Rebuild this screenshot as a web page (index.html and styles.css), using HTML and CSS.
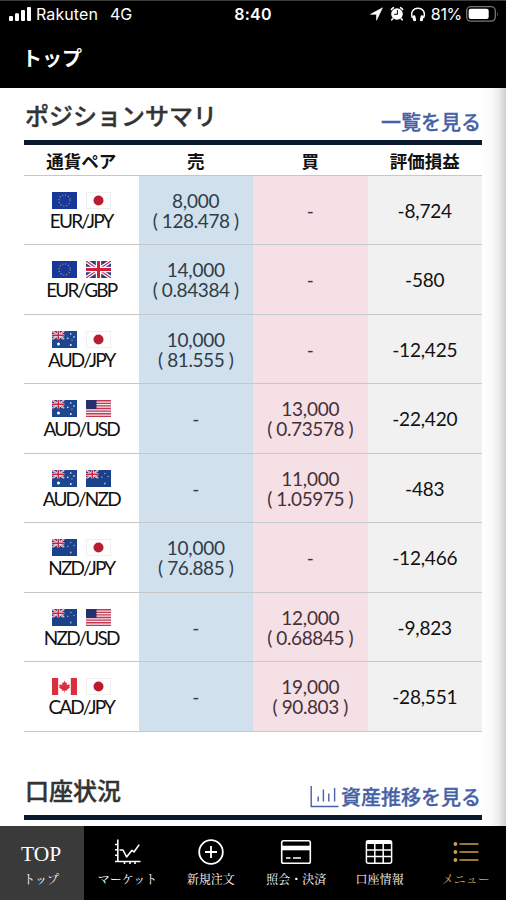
FILE: index.html
```html
<!DOCTYPE html>
<html lang="ja">
<head>
<meta charset="utf-8">
<title>トップ</title>
<link rel="stylesheet" href="styles.css">
</head>
<body>
<svg class="defs" width="0" height="0" aria-hidden="true">
  <symbol id="eu" viewBox="0 0 25 17"><rect width="25" height="17" fill="#17379b"/><circle cx="12.5" cy="8.5" r="5.6" fill="none" stroke="#a5a66f" stroke-width="1.2" stroke-dasharray="1 1.932"/></symbol>
  <symbol id="jp" viewBox="0 0 25 17"><rect x=".4" y=".4" width="24.2" height="16.2" fill="#fff" stroke="#ececec" stroke-width=".8"/><circle cx="12.5" cy="8.5" r="5" fill="#b71c30"/></symbol>
  <symbol id="gb" viewBox="0 0 25 17"><rect width="25" height="17" fill="#2b3a82"/><path d="M0 0L25 17M25 0L0 17" stroke="#fff" stroke-width="3.6"/><path d="M0 0L25 17M25 0L0 17" stroke="#c92b45" stroke-width="1.2"/><path d="M12.5 0V17M0 8.5H25" stroke="#fff" stroke-width="5.4"/><path d="M12.5 0V17M0 8.5H25" stroke="#cf1f3a" stroke-width="3"/></symbol>
  <symbol id="au" viewBox="0 0 25 17"><rect width="25" height="17" fill="#1d4590"/><use href="#gb" width="12.5" height="8.5"/><g fill="#fff"><circle cx="6.5" cy="13" r="1.5"/><circle cx="18.8" cy="3" r=".8"/><circle cx="15.8" cy="7.3" r=".8"/><circle cx="22" cy="6" r=".8"/><circle cx="20" cy="9" r=".5"/><circle cx="18.8" cy="14" r=".9"/></g></symbol>
  <symbol id="nz" viewBox="0 0 25 17"><rect width="25" height="17" fill="#1c418b"/><use href="#gb" width="12.5" height="8.5"/><g fill="#a9aed0"><circle cx="18.8" cy="3.5" r=".7"/><circle cx="15.8" cy="7.3" r=".7"/><circle cx="22" cy="6.5" r=".7"/><circle cx="18.8" cy="13.5" r=".9"/></g></symbol>
  <symbol id="us" viewBox="0 0 25 17"><rect width="25" height="17" fill="#f7e6ea"/><path d="M0 .7H25M0 3.3H25M0 5.9H25M0 8.5H25M0 11.1H25M0 13.7H25M0 16.3H25" stroke="#bd3a52" stroke-width="1.35"/><rect width="10.5" height="9" fill="#27306f"/></symbol>
  <symbol id="ca" viewBox="0 0 25 17"><rect width="25" height="17" fill="#fff"/><path d="M0 0H6.2V17H0ZM18.8 0H25V17H18.8Z" fill="#d8303f"/><path d="M12.5 2.8L13.7 5L15 4.5L14.7 7.5L16.4 6L16.8 7L18 6.8L17.3 8.8L18 9.4L14.9 11.8L15 12.7L12.8 12.4V14.4H12.2V12.4L10 12.7L10.1 11.8L7 9.4L7.7 8.8L7 6.8L8.2 7L8.6 6L10.3 7.5L10 4.5L11.3 5Z" fill="#d8303f"/></symbol>
</svg>

<header class="top">
  <div class="status">
    <div class="carrier">
      <svg width="24" height="16" viewBox="0 0 24 16" fill="#fff"><rect x="1" y="10" width="4" height="5" rx="1"/><rect x="7" y="7.3" width="4" height="7.7" rx="1"/><rect x="13" y="4" width="4" height="11" rx="1"/><rect x="19" y="1" width="4" height="14" rx="1"/></svg>
      <span class="name">Rakuten</span><span class="net">4G</span>
    </div>
    <div class="clock">8:40</div>
    <div class="indicators">
      <svg class="loc" width="13" height="14" viewBox="0 0 13 14"><path d="M12.5 .8L.5 7.3H6.5V13.3Z" fill="#fff" stroke="#fff" stroke-width=".6" stroke-linejoin="round"/></svg>
      <svg class="alarm" width="14" height="16" viewBox="0 0 14 16"><circle cx="7" cy="8" r="5.8" fill="#fff"/><path d="M1.4 3.4L3.4 1.7M10.6 1.7L12.6 3.4M2.8 12.7L1.8 13.8M11.2 12.7L12.2 13.8" stroke="#fff" stroke-width="1.6" stroke-linecap="round"/><path d="M7.4 4.2V8.3H4.2" fill="none" stroke="#000" stroke-width="1"/></svg>
      <svg class="phones" width="14" height="15" viewBox="0 0 14 15"><path d="M1.5 11C-1 5 2.5 1.2 7 1.2S15 5 12.5 11" fill="none" stroke="#fff" stroke-width="1.5"/><rect x="1.7" y="8.3" width="3" height="6" rx="1.2" transform="rotate(-12 3 11)" fill="#fff"/><rect x="9.3" y="8.3" width="3" height="6" rx="1.2" transform="rotate(12 11 11)" fill="#fff"/></svg>
      <span class="pct">81%</span>
      <svg class="batt" width="34" height="16" viewBox="0 0 34 16"><rect x=".7" y=".7" width="28.6" height="14.4" rx="4" fill="none" stroke="#777" stroke-width="1.3"/><rect x="2.7" y="2.7" width="20" height="10.4" rx="2" fill="#fff"/><path d="M31.2 5.7Q33 8 31.2 10.3Z" fill="#777"/></svg>
    </div>
  </div>
  <h1 class="title">トップ</h1>
</header>

<main class="content">
  <section>
    <div class="head">
      <h2>ポジションサマリ</h2>
      <a class="link">一覧を見る</a>
    </div>
    <div class="row labels"><div>通貨ペア</div><div>売</div><div>買</div><div>評価損益</div></div>
    <div class="row">
      <div class="pair"><span class="flags"><svg><use href="#eu"/></svg><svg><use href="#jp"/></svg></span><span class="code">EUR/JPY</span></div>
      <div class="sell"><span>8,000</span><span class="rate">( 128.478 )</span></div><div class="buy">-</div><div class="pl">-8,724</div>
    </div>
    <div class="row">
      <div class="pair"><span class="flags"><svg><use href="#eu"/></svg><svg><use href="#gb"/></svg></span><span class="code">EUR/GBP</span></div>
      <div class="sell"><span>14,000</span><span class="rate">( 0.84384 )</span></div><div class="buy">-</div><div class="pl">-580</div>
    </div>
    <div class="row">
      <div class="pair"><span class="flags"><svg><use href="#au"/></svg><svg><use href="#jp"/></svg></span><span class="code">AUD/JPY</span></div>
      <div class="sell"><span>10,000</span><span class="rate">( 81.555 )</span></div><div class="buy">-</div><div class="pl">-12,425</div>
    </div>
    <div class="row">
      <div class="pair"><span class="flags"><svg><use href="#au"/></svg><svg><use href="#us"/></svg></span><span class="code">AUD/USD</span></div>
      <div class="sell">-</div><div class="buy"><span>13,000</span><span class="rate">( 0.73578 )</span></div><div class="pl">-22,420</div>
    </div>
    <div class="row">
      <div class="pair"><span class="flags"><svg><use href="#au"/></svg><svg><use href="#nz"/></svg></span><span class="code">AUD/NZD</span></div>
      <div class="sell">-</div><div class="buy"><span>11,000</span><span class="rate">( 1.05975 )</span></div><div class="pl">-483</div>
    </div>
    <div class="row">
      <div class="pair"><span class="flags"><svg><use href="#nz"/></svg><svg><use href="#jp"/></svg></span><span class="code">NZD/JPY</span></div>
      <div class="sell"><span>10,000</span><span class="rate">( 76.885 )</span></div><div class="buy">-</div><div class="pl">-12,466</div>
    </div>
    <div class="row">
      <div class="pair"><span class="flags"><svg><use href="#nz"/></svg><svg><use href="#us"/></svg></span><span class="code">NZD/USD</span></div>
      <div class="sell">-</div><div class="buy"><span>12,000</span><span class="rate">( 0.68845 )</span></div><div class="pl">-9,823</div>
    </div>
    <div class="row">
      <div class="pair"><span class="flags"><svg><use href="#ca"/></svg><svg><use href="#jp"/></svg></span><span class="code">CAD/JPY</span></div>
      <div class="sell">-</div><div class="buy"><span>19,000</span><span class="rate">( 90.803 )</span></div><div class="pl">-28,551</div>
    </div>
  </section>
  <section class="account">
    <div class="head">
      <h2>口座状況</h2>
      <a class="link"><svg width="29" height="22" viewBox="0 0 29 22" fill="none" stroke="#4661a5" stroke-width="1.4"><path d="M1.2 0V20.5H28.5M8.2 10.5V15.5M13.4 3.5V15.5M18.8 7.5V15.5M24.6 2V15.5"/></svg>資産推移を見る</a>
    </div>
  </section>
</main>

<nav class="tabs">
  <a class="tab active"><span class="glyph">TOP</span><span class="label">トップ</span></a>
  <a class="tab shift"><svg width="30" height="28" viewBox="0 0 30 28" fill="none" stroke="#fff" stroke-width="1.6"><path d="M5.8 1.5V23.5M3 23.5H28.5M3 6.5H6M3 11.8H6M3 17.2H6M12.5 23.5V26M18 23.5V26M23 23.5V26"/><path d="M7.5 12H11L14.6 19L20 12.3L22 14L27.2 6.6" stroke-linejoin="round"/></svg><span class="label">マーケット</span></a>
  <a class="tab"><svg width="28" height="28" viewBox="0 0 28 28" fill="none" stroke="#fff" stroke-width="1.8"><circle cx="14" cy="14" r="11.8"/><path d="M8 14H20M14 8V20"/></svg><span class="label">新規注文</span></a>
  <a class="tab shift"><svg width="32" height="28" viewBox="0 0 32 28"><rect x="1.7" y="2.8" width="28.6" height="22.5" rx="1.8" fill="none" stroke="#fff" stroke-width="1.6"/><rect x="1.5" y="7.7" width="29" height="4.6" fill="#fff"/><path d="M6 20H10.5M13 20H21" stroke="#fff" stroke-width="1.7"/></svg><span class="label">照会・決済</span></a>
  <a class="tab"><svg width="28" height="28" viewBox="0 0 28 28" fill="none" stroke="#fff" stroke-width="1.5"><rect x="1.4" y="2.8" width="25.2" height="22.4" rx="2"/><path d="M1 4.4H27" stroke-width="3.2"/><path d="M1.4 12H26.6M1.4 18.6H26.6M9.8 4V25M18.2 4V25"/></svg><span class="label">口座情報</span></a>
  <a class="tab menu"><svg width="28" height="28" viewBox="0 0 28 28" fill="#c9a04e"><circle cx="3.4" cy="6" r="1.9"/><circle cx="3.4" cy="14" r="1.9"/><circle cx="3.4" cy="22" r="1.9"/><path d="M7.5 6H26.5M7.5 14H26.5M7.5 22H26.5" stroke="#c9a04e" stroke-width="1.7"/></svg><span class="label">メニュー</span></a>
</nav>
</body>
</html>
```
FILE: styles.css
```css
* { box-sizing: border-box; }
body {
  margin: 0;
  width: 506px;
  height: 900px;
  overflow: hidden;
  display: flex;
  flex-direction: column;
  background: #fff;
  font-family: Lato, "Noto Sans CJK JP", sans-serif;
}
.defs { position: absolute; }
.top {
  height: 87.5px;
  flex: none;
  background: #000;
  border-top: 1px solid #3c3c3c;
  color: #fff;
}
.status {
  height: 26px;
  display: grid;
  grid-template-columns: 1fr auto 1fr;
  align-items: center;
  padding: 0 8px;
  font: 16px/26px Inter, sans-serif;
}
.carrier, .indicators { display: flex; align-items: center; }
.name { margin-left: 4px; letter-spacing: .1px; }
.net { margin-left: 12px; }
.clock { font-weight: 600; letter-spacing: .2px; }
.indicators { justify-content: flex-end; }
.alarm { margin-left: 7px; }
.phones { margin-left: 7px; }
.pct { margin: 0 4px 0 6px; letter-spacing: -.3px; }
.batt { margin-right: -2px; }
.title {
  margin: 17px 0 0 22px;
  font: 700 20px/28px "Noto Sans CJK JP", sans-serif;
}
.content {
  flex: 1;
  min-height: 0;
  padding: 0 24px;
  background: linear-gradient(to right, #fff 482px, #f9f9f9 492px, #ececec 499px, #cecece 506px);
}
.head {
  height: 57.5px;
  display: flex;
  justify-content: space-between;
  align-items: flex-end;
  border-bottom: 5.5px solid #0c1a30;
}
.head h2 {
  margin: 0 0 8px 1px;
  font: 500 24px/34px "Noto Sans CJK JP", sans-serif;
  color: #333;
  -webkit-text-stroke: .4px #333;
}
.link {
  display: flex;
  align-items: center;
  gap: 2px;
  margin: 0 1px 3px 0;
  font: 500 20px/30px "Noto Sans CJK JP", sans-serif;
  color: #4661a5;
  -webkit-text-stroke: .3px #4661a5;
}
.row {
  display: grid;
  grid-template-columns: repeat(4, 114.5px);
  height: 69.5px;
  border-bottom: 1px solid #c5c8cb;
  font-size: 19px;
  line-height: 20px;
  letter-spacing: -.2px;
}
.row > div {
  display: flex;
  flex-direction: column;
  align-items: center;
  justify-content: center;
  padding-top: 2px;
}
.row.labels {
  height: 30.5px;
  font: 700 17.5px/26px "Noto Sans CJK JP", sans-serif;
  letter-spacing: 0;
  color: #111;
}
.sell { background: #d1e0ed; color: #2f3d4a; }
.buy { background: #f4e0e5; color: #463038; }
.pl { background: #f1f1f1; color: #111; }
.rate { letter-spacing: -.4px; }
.row > .pair { padding-top: 3px; }
.flags { display: flex; gap: 9px; margin-bottom: 2px; }
.flags svg { width: 25px; height: 17px; }
.code { letter-spacing: -1.8px; color: #111; }
.account { margin-top: 30.5px; }
.tabs {
  height: 74px;
  flex: none;
  display: grid;
  grid-template-columns: repeat(6, 1fr);
  background: #000;
  color: #fff;
}
.tab {
  display: flex;
  flex-direction: column;
  align-items: center;
  padding-top: 12px;
}
.shift { padding-left: 2px; }
.active { background: #3a3a3a; padding-right: 2px; }
.glyph { height: 28px; font: 21.5px/32px "Liberation Serif", serif; }
.label {
  margin-top: 4px;
  font: 12px/18px "Noto Serif CJK JP", "Noto Sans CJK JP", serif;
  white-space: nowrap;
}
.menu { color: #c9a04e; padding-left: 4px; }
```
